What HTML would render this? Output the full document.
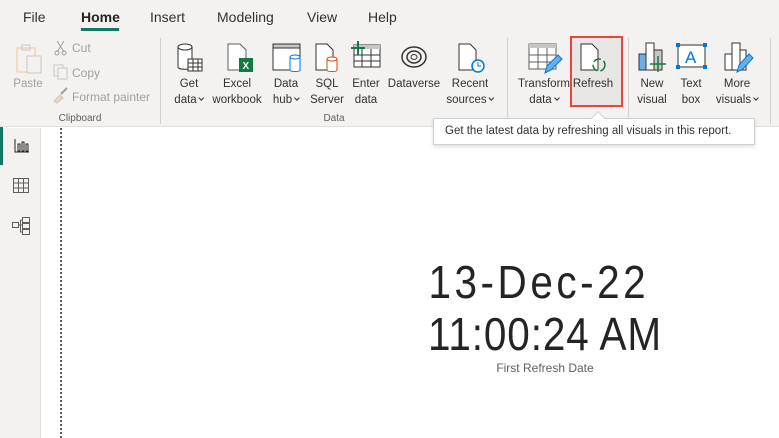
<!DOCTYPE html>
<html><head><meta charset="utf-8"><style>
*{margin:0;padding:0;box-sizing:border-box}
body{width:779px;height:438px;overflow:hidden;background:#fff;font-family:"Liberation Sans",sans-serif;position:relative;color:#252423}
.a{position:absolute}
.tab{position:absolute;top:9px;font-size:14px;color:#323130}
.lbl{position:absolute;font-size:11.5px;color:#323130;text-align:center;line-height:16px;white-space:nowrap;transform:translateX(-50%)}
.dis{color:#a19f9d}
.sep{position:absolute;top:38px;width:1px;height:86px;background:#d2d0ce}
.gl{position:absolute;top:113px;font-size:10px;color:#605e5c;transform:translateX(-50%)}
.cv{display:inline-block;width:4px;height:4px;border-right:1px solid #323130;border-bottom:1px solid #323130;transform:rotate(45deg);margin:0 0 3px 3px}
svg{position:absolute;overflow:visible}
</style></head><body>
<div class="a" style="left:0;top:0;width:779px;height:127px;background:#f3f2f1;border-bottom:1px solid #e1dfdd"></div>
<div class="tab" style="left:23px">File</div>
<div class="tab" style="left:81px;font-weight:bold;color:#252423">Home</div>
<div class="a" style="left:81px;top:28px;width:38px;height:3px;background:#117865"></div>
<div class="tab" style="left:150px">Insert</div>
<div class="tab" style="left:217px">Modeling</div>
<div class="tab" style="left:307px">View</div>
<div class="tab" style="left:368px">Help</div>

<div class="sep" style="left:160px"></div>
<div class="sep" style="left:507px"></div>
<div class="sep" style="left:628px"></div>
<div class="sep" style="left:770px"></div>
<div class="gl" style="left:80px">Clipboard</div>
<div class="gl" style="left:334px">Data</div>

<svg style="left:16px;top:44px" width="30" height="32"><rect x="1" y="4" width="18" height="24" fill="none" stroke="#f2d5b5" stroke-width="1.5"/><rect x="6" y="1" width="8" height="5" fill="none" stroke="#c8c6c4"/><rect x="11" y="12" width="14" height="17" fill="#f3f2f1" stroke="#c8c6c4"/></svg>
<div class="lbl dis" style="left:28px;top:76px">Paste</div>
<svg style="left:54px;top:40px" width="14" height="16"><path d="M3 1L10 12M10 1L3 12" stroke="#a19f9d" fill="none"/><circle cx="3" cy="13" r="2" fill="none" stroke="#a19f9d"/><circle cx="10" cy="13" r="2" fill="none" stroke="#a19f9d"/></svg>
<div class="a dis" style="left:72px;top:41px;font-size:12px">Cut</div>
<svg style="left:53px;top:64px" width="16" height="16"><rect x="1" y="1" width="9" height="11" fill="none" stroke="#c8c6c4"/><rect x="5" y="4" width="9" height="11" fill="#f3f2f1" stroke="#c8c6c4"/></svg>
<div class="a dis" style="left:72px;top:66px;font-size:12px">Copy</div>
<svg style="left:52px;top:87px" width="18" height="16"><path d="M2 14L8 8L11 11L5 16Z" fill="#f2d5b5" stroke="#c8c6c4"/><path d="M9 7L15 1" stroke="#a19f9d" stroke-width="2"/></svg>
<div class="a dis" style="left:72px;top:90px;font-size:12px">Format painter</div>

<svg style="left:177px;top:43px" width="28" height="32"><path d="M1 4v20c0 3 14 3 14 0V4" fill="#fff" stroke="#323130"/><ellipse cx="8" cy="4" rx="7" ry="3" fill="#fff" stroke="#323130"/><rect x="11" y="16" width="14" height="12" fill="#fff" stroke="#323130"/><path d="M11 20h14M11 24h14M16 16v12M21 16v12" stroke="#323130"/></svg>
<div class="lbl" style="left:189px;top:76px">Get<br>data<span class="cv"></span></div>
<svg style="left:227px;top:43px" width="28" height="32"><path d="M1 1h12l6 6v20H1Z" fill="#fff" stroke="#605e5c"/><rect x="12" y="15" width="14" height="14" fill="#107c41"/><text x="15.5" y="26" font-size="10" font-weight="bold" fill="#fff" font-family="Liberation Sans">X</text></svg>
<div class="lbl" style="left:237px;top:76px">Excel<br>workbook</div>
<svg style="left:272px;top:43px" width="32" height="32"><rect x="1" y="1" width="27" height="26" fill="#fff" stroke="#323130"/><rect x="1" y="1" width="27" height="4" fill="#c8c6c4" stroke="#323130"/><path d="M18 14v13c0 2 10 2 10 0V14" fill="#fff" stroke="#0078d4"/><ellipse cx="23" cy="14" rx="5" ry="2" fill="#fff" stroke="#0078d4"/></svg>
<div class="lbl" style="left:286px;top:76px">Data<br>hub<span class="cv"></span></div>
<svg style="left:315px;top:43px" width="28" height="32"><path d="M1 1h11l6 6v20H1Z" fill="#fff" stroke="#323130"/><path d="M12 16v11c0 2 10 2 10 0V16" fill="#fff" stroke="#ca5010"/><ellipse cx="17" cy="16" rx="5" ry="2" fill="#fff" stroke="#ca5010"/></svg>
<div class="lbl" style="left:327px;top:76px">SQL<br>Server</div>
<svg style="left:350px;top:41px" width="32" height="32"><rect x="4" y="4" width="26" height="22" fill="#fff" stroke="#323130"/><rect x="4" y="4" width="26" height="4" fill="#c8c6c4"/><path d="M4 14h26M4 20h26M12 8v18M21 8v18" stroke="#323130"/><path d="M8 0v14M1 7h14" stroke="#107c41" stroke-width="2"/></svg>
<div class="lbl" style="left:366px;top:76px">Enter<br>data</div>
<svg style="left:400px;top:45px" width="30" height="26"><ellipse cx="14" cy="12" rx="12" ry="10" fill="none" stroke="#323130" stroke-width="1.5"/><ellipse cx="14" cy="12" rx="7" ry="6" fill="none" stroke="#323130" stroke-width="1.5"/><ellipse cx="14" cy="12" rx="3" ry="2.5" fill="none" stroke="#323130"/></svg>
<div class="lbl" style="left:414px;top:76px">Dataverse</div>
<svg style="left:458px;top:43px" width="30" height="32"><path d="M1 1h11l6 6v20H1Z" fill="#fff" stroke="#323130"/><circle cx="20" cy="23" r="6" fill="#fff" stroke="#0078d4" stroke-width="1.5"/><path d="M20 19v4h3" stroke="#0078d4" fill="none"/></svg>
<div class="lbl" style="left:470px;top:76px">Recent<br>sources<span class="cv"></span></div>
<svg style="left:528px;top:43px" width="34" height="32"><rect x="1" y="1" width="27" height="25" fill="#fff" stroke="#605e5c"/><rect x="1" y="1" width="27" height="4" fill="#c8c6c4"/><path d="M1 12h27M1 19h27M10 5v21M19 5v21" stroke="#605e5c"/><path d="M17 30l2-7 11-11 4 4-11 11Z" fill="#69afe5" stroke="#0078d4"/></svg>
<div class="lbl" style="left:544px;top:76px">Transform<br>data<span class="cv"></span></div>
<div class="a" style="left:570px;top:36px;width:53px;height:71px;background:#e8e6e4;border:2px solid #e8453c"></div>
<svg style="left:580px;top:43px" width="30" height="32"><path d="M1 1h11l6 6v20H1Z" fill="#fff" stroke="#323130"/><circle cx="19" cy="22" r="6" fill="none" stroke="#107c41" stroke-width="1.5" stroke-dasharray="8 3"/></svg>
<div class="lbl" style="left:593px;top:76px">Refresh</div>
<svg style="left:638px;top:42px" width="30" height="32"><rect x="1" y="12" width="8" height="16" fill="#69afe5" stroke="#323130"/><rect x="8" y="1" width="8" height="27" fill="#fff" stroke="#323130"/><rect x="16" y="8" width="8" height="20" fill="#c8c6c4" stroke="#323130"/><path d="M20 14v16M12 22h16" stroke="#107c41" stroke-width="1.5"/></svg>
<div class="lbl" style="left:652px;top:76px">New<br>visual</div>
<svg style="left:676px;top:43px" width="32" height="28"><rect x="2" y="2" width="27" height="22" fill="#fff" stroke="#323130"/><rect x="0" y="0" width="4" height="4" fill="#0078d4"/><rect x="27" y="0" width="4" height="4" fill="#0078d4"/><rect x="0" y="22" width="4" height="4" fill="#0078d4"/><rect x="27" y="22" width="4" height="4" fill="#0078d4"/><text x="9" y="20" font-size="17" fill="#0078d4" font-family="Liberation Sans">A</text></svg>
<div class="lbl" style="left:691px;top:76px">Text<br>box</div>
<svg style="left:724px;top:42px" width="32" height="32"><rect x="1" y="12" width="8" height="16" fill="#fff" stroke="#323130"/><rect x="8" y="1" width="8" height="27" fill="#fff" stroke="#323130"/><rect x="16" y="8" width="6" height="20" fill="#fff" stroke="#323130"/><path d="M13 30l2-7 10-11 4 4-10 11Z" fill="#69afe5" stroke="#0078d4"/></svg>
<div class="lbl" style="left:737px;top:76px">More<br>visuals<span class="cv"></span></div>

<div class="a" style="left:0;top:128px;width:41px;height:310px;background:#f3f2f1;border-right:1px solid #e1dfdd"></div>
<div class="a" style="left:0;top:127px;width:3px;height:38px;background:#117865"></div>
<svg style="left:14px;top:138px" width="16" height="16"><path d="M1 1v13h14" stroke="#252423" fill="none"/><rect x="4" y="6" width="2" height="7" fill="none" stroke="#252423"/><rect x="8" y="4" width="2" height="9" fill="none" stroke="#252423"/><rect x="12" y="6" width="2" height="7" fill="none" stroke="#252423"/></svg>
<svg style="left:13px;top:178px" width="16" height="16"><rect x="0.5" y="0.5" width="15" height="14" fill="none" stroke="#605e5c"/><path d="M0.5 5h15M0.5 10h15M5.5 0.5v14M10.5 0.5v14" stroke="#605e5c"/></svg>
<svg style="left:12px;top:217px" width="18" height="18"><rect x="0.5" y="5.5" width="6" height="5" fill="none" stroke="#605e5c"/><rect x="10.5" y="0.5" width="7" height="5" fill="none" stroke="#605e5c"/><rect x="10.5" y="6.5" width="7" height="5" fill="none" stroke="#605e5c"/><rect x="10.5" y="12.5" width="7" height="5" fill="none" stroke="#605e5c"/><path d="M6.5 8h4M8.5 3v12h2M8.5 3h2" stroke="#605e5c" fill="none"/></svg>

<div class="a" style="left:60px;top:128px;width:0;height:310px;border-left:2px dotted #605e5c"></div>

<div class="a" style="left:433px;top:118px;width:322px;height:27px;background:#fff;border:1px solid #d2d0ce;box-shadow:0 2px 4px rgba(0,0,0,.12);font-size:11.5px;color:#323130;padding:6px 0 0 11px;white-space:nowrap">Get the latest data by refreshing all visuals in this report.</div>
<div class="a" style="left:593px;top:113px;width:10px;height:10px;background:#fff;border-left:1px solid #d2d0ce;border-top:1px solid #d2d0ce;transform:rotate(45deg)"></div>

<div class="a" style="left:380px;top:256px;width:330px;text-align:center;font-size:46px;line-height:52px;color:#252423;transform:scaleX(0.88);transform-origin:165px 0">
<div style="letter-spacing:4px;margin-left:-14px">13-Dec-22</div>
<div style="letter-spacing:1px">11:00:24 AM</div>
</div>
<div class="a" style="left:380px;top:361px;width:330px;text-align:center;font-size:12px;color:#605e5c">First Refresh Date</div>
</body></html>
